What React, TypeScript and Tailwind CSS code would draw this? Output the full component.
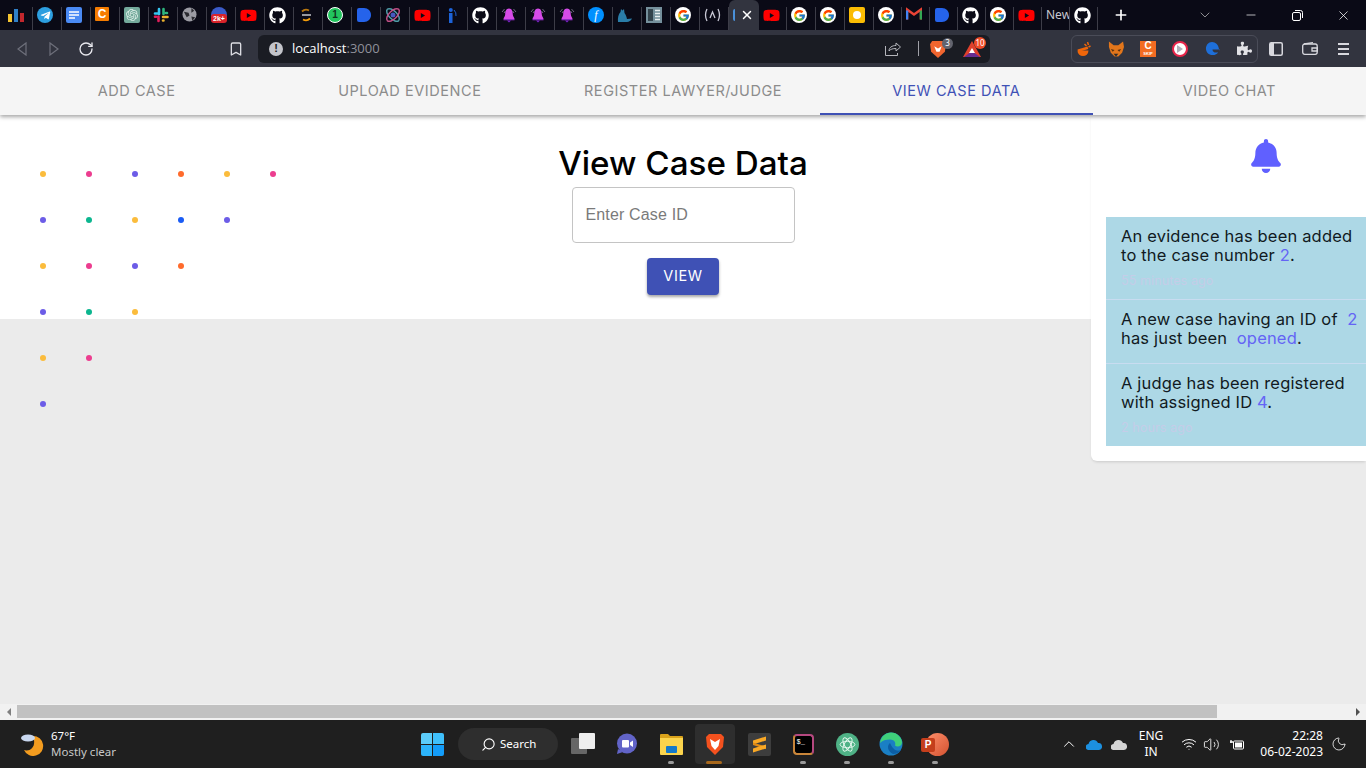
import React from "react";
import { FaGithub, FaYoutube, FaTelegramPlane, FaBell, FaPuzzlePiece } from "react-icons/fa";
import { FcGoogle } from "react-icons/fc";
import { SiOpenai } from "react-icons/si";
import { RotateCw, Bookmark, Minus, X, Plus, ChevronDown, Search, ChevronUp, Wifi, Volume2, Moon } from "lucide-react";

const sans = "font-['Inter','Noto_Sans',sans-serif]";

const Gh = () => <FaGithub className="h-[17px] w-[17px] text-white" />;
const Yt = () => <FaYoutube className="h-[17px] w-[17px] text-[#f00]" />;
const G = () => (
  <span className="flex h-[16px] w-[16px] items-center justify-center rounded-full bg-white">
    <FcGoogle className="h-[13px] w-[13px]" />
  </span>
);
const Alarm = () => (
  <svg width="16" height="16" viewBox="0 0 16 16">
    <path d="M8 1.500c3 0 3.800 3 3.800 6 0 2 1.700 3 1.700 4.500h-11c0-1.500 1.700-2.500 1.700-4.500 0-3 .8-6 3.800-6z" fill="#d64be8" />
    <path d="M2.500 12h11v1.300h-11z" fill="#8e2bc4" />
    <path d="M6 13.500h4l-2 2z" fill="#7e22ce" />
    <path d="M1 5l2.500-3M15 5l-2.500-3M3 6l1.500-2M13 6l-1.500-2" stroke="#6f6a80" strokeWidth="1" />
  </svg>
);
const DBlue = () => (
  <svg width="16" height="16" viewBox="0 0 16 16">
    <path d="M1 3a2 2 0 012-2h5c4 0 7 3 7 7s-3 7-7 7H3a2 2 0 01-2-2z" fill="#2563eb" />
  </svg>
);

const tabs: { n: React.ReactNode }[] = [
  { n: <svg width="16" height="16" viewBox="0 0 16 16"><rect x="0" y="7" width="4" height="8" fill="#f4c430" /><rect x="6" y="2" width="4" height="13" fill="#2f80c8" /><rect x="12" y="6" width="4" height="9" fill="#c2272d" /></svg> },
  { n: <span className="flex h-[16px] w-[16px] items-center justify-center rounded-full bg-[#2d9fe0]"><FaTelegramPlane className="h-[11px] w-[11px] text-white" /></span> },
  { n: <svg width="16" height="16" viewBox="0 0 16 16"><rect width="16" height="16" rx="2" fill="#4a8af4" /><path d="M3 5h10M3 8h10M3 11h6" stroke="#fff" strokeWidth="1.500" /></svg> },
  { n: <span className="flex h-[14px] w-[14px] items-center justify-center rounded-[1px] bg-[#f57c00] font-['Liberation_Sans',sans-serif] text-[12px] font-bold leading-none text-white">C</span> },
  { n: <span className="flex h-[16px] w-[16px] items-center justify-center rounded-[2px] bg-[#74aa9c]"><SiOpenai className="h-[12px] w-[12px] text-[#dff0ea]" /></span> },
  { n: <svg width="16" height="16" viewBox="0 0 16 16" fill="none" strokeWidth="2.600" strokeLinecap="round"><path d="M6 2v5M2 6.500h3" stroke="#36c5f0" /><path d="M10.500 2v5M14 6h-1" stroke="#2eb67d" /><path d="M10 10h4.500M10.500 13.500h-.5" stroke="#ecb22e" /><path d="M5.500 9.500v4.500M2 9.800h1" stroke="#e01e5a" /></svg> },
  { n: <svg width="15" height="15" viewBox="0 0 16 16"><circle cx="8" cy="8" r="7.500" fill="#9b9ba3" /><path d="M2 5l5 1 1 3-3 2zM10 1l3 3-3 2zM10 10l4 1-3 4z" fill="#2a2a30" /></svg> },
  { n: <span className="relative flex h-[16px] w-[16px] justify-center"><span className="h-[16px] w-[16px] rounded-full bg-[#3b5bc8]" /><span className="absolute left-0 top-[7px] w-[16px] rounded-[3px] bg-[#d8232a] text-center font-['Liberation_Sans',sans-serif] text-[7px] font-bold leading-[9px] text-white">2k+</span></span> },
  { n: <Yt /> },
  { n: <Gh /> },
  { n: <svg width="16" height="16" viewBox="0 0 16 16" fill="none"><path d="M11 3.500A6 6 0 004 4.500" stroke="#b9770e" strokeWidth="1.800" /><path d="M5 12.500a6 6 0 007-1" stroke="#f59e0b" strokeWidth="1.800" /><path d="M4 8h9" stroke="#e5e7eb" strokeWidth="1.300" /></svg> },
  { n: <span className="flex h-[16px] w-[16px] items-center justify-center rounded-full border-[1.500px] border-white bg-[#22c55e]"><span className="font-['Liberation_Sans',sans-serif] text-[10px] font-bold leading-none text-[#10321f]">1</span></span> },
  { n: <DBlue /> },
  { n: <svg width="16" height="16" viewBox="0 0 16 16" fill="none"><ellipse cx="8" cy="8" rx="8" ry="4" transform="rotate(45 8 8)" stroke="#4f9ca8" strokeWidth="1.500" /><ellipse cx="8" cy="8" rx="8" ry="4" transform="rotate(-45 8 8)" stroke="#c04f86" strokeWidth="1.500" /><circle cx="8" cy="8" r="2.500" fill="#4858c0" /></svg> },
  { n: <Yt /> },
  { n: <svg width="16" height="16" viewBox="0 0 16 16"><rect x="6" y="6" width="3.500" height="10" fill="#1d63d8" /><circle cx="7.800" cy="3" r="2" fill="#1d63d8" /><path d="M13 9a7 7 0 00-2-6" stroke="#1d63d8" strokeWidth="1" fill="none" /></svg> },
  { n: <Gh /> },
  { n: <Alarm /> },
  { n: <Alarm /> },
  { n: <Alarm /> },
  { n: <span className="flex h-[16px] w-[16px] items-center justify-center rounded-full bg-[#0090ff] font-['Liberation_Serif',serif] text-[12px] italic leading-none text-white">f</span> },
  { n: <svg width="16" height="16" viewBox="0 0 16 16"><path d="M1 15c-.5-4 .5-8 2.500-10l.5-3 1.500 1.500L7 2l.5 4c1.500 2 2 4 2.500 6l5-.5c-1 2-3 3.500-5 3.500z" fill="#2a7da8" /></svg> },
  { n: <svg width="16" height="16" viewBox="0 0 16 16"><rect width="16" height="16" fill="#75909c" /><rect x="2" y="2" width="5" height="12" fill="#33434c" /><path d="M9 3.500h5M9 6.500h5M9 9.500h5M9 12.500h5" stroke="#e8eef0" strokeWidth="1.500" /></svg> },
  { n: <G /> },
  { n: <svg width="17" height="16" viewBox="0 0 17 16" fill="none" stroke="#c9c9d6" strokeWidth="1.300"><path d="M3 2C1 6 1 10 3 14M14 2c2 4 2 8 0 12M6 11l2.500-6L11 11" /></svg> },
];
const tabsRight: { n: React.ReactNode; w: number }[] = [
  { n: <Yt />, w: 28 },
  { n: <G />, w: 29 },
  { n: <G />, w: 29 },
  { n: <span className="flex h-[16px] w-[16px] items-center justify-center rounded-[2px] bg-[#fbbc04]"><span className="h-[8px] w-[8px] rounded-full bg-white" /></span>, w: 29 },
  { n: <G />, w: 28 },
  { n: <svg width="16" height="13" viewBox="0 0 16 12" fill="none"><path d="M1 12V2l7 5 7-5v10" stroke="#ea4335" strokeWidth="2.500" /><path d="M1 12V3" stroke="#4285f4" strokeWidth="2.500" /><path d="M15 12V3" stroke="#34a853" strokeWidth="2.500" /></svg>, w: 28 },
  { n: <DBlue />, w: 28 },
  { n: <Gh />, w: 28 },
  { n: <G />, w: 28 },
  { n: <Yt />, w: 28 },
  { n: <span className="font-['Noto_Sans',sans-serif] text-[12px] leading-[16px] text-[#c8c8d0]">New</span>, w: 28 },
  { n: <Gh />, w: 28 },
];

function Tab({ n, w = 29 }: { n: React.ReactNode; w?: number }) {
  return (
    <div className="mt-[7px] flex h-[23px] shrink-0 items-start overflow-hidden border-r border-[#3d3d48] pl-[4px]" style={{ width: w }}>
      <span className="flex">{n}</span>
    </div>
  );
}

function TabStrip() {
  return (
    <div className="flex h-[30px] shrink-0 items-start bg-[#0a0a16] pl-[4px]">
      {tabs.map((t, i) => (
        <Tab key={i} n={t.n} />
      ))}
      <div className="flex h-[30px] w-[30px] shrink-0 items-center rounded-t-[6px] bg-[#32343f] pl-[4px]">
        <span className="h-[12px] w-[2px] rounded-l-full bg-[#4a90d9]" />
        <X className="ml-[5px] h-[14px] w-[14px] text-white" strokeWidth={2.500} />
      </div>
      {tabsRight.map((t, i) => (
        <Tab key={i} n={t.n} w={t.w} />
      ))}
      <div className="flex h-[30px] w-[46px] items-center justify-center">
        <Plus className="h-[16px] w-[16px] text-white" strokeWidth={2.500} />
      </div>
      <div className="ml-[38px] flex">
        <span className="flex h-[30px] w-[46px] items-center justify-center"><ChevronDown className="h-[16px] w-[16px] text-[#d0d0d0]" strokeWidth={1} /></span>
        <span className="flex h-[30px] w-[46px] items-center justify-center"><Minus className="h-[14px] w-[14px] text-white" strokeWidth={1.200} /></span>
        <span className="flex h-[30px] w-[46px] items-center justify-center">
          <svg width="11" height="11" viewBox="0 0 11 11" fill="none" stroke="#fff"><rect x=".5" y="2.500" width="8" height="8" rx="1.500" /><path d="M3 .5h5.500a2 2 0 012 2V8" /></svg>
        </span>
        <span className="flex h-[30px] w-[46px] items-center justify-center"><X className="h-[15px] w-[15px] text-white" strokeWidth={1.200} /></span>
      </div>
    </div>
  );
}

function ExtSlot({ children }: { children: React.ReactNode }) {
  return <span className="flex h-[16px] w-[16px] items-center justify-center">{children}</span>;
}

function Toolbar() {
  return (
    <div className="flex h-[37px] shrink-0 items-center bg-[#32343f]">
      <div className="flex w-[258px] shrink-0 items-center">
        <svg className="ml-[17px]" width="10" height="14" viewBox="0 0 10 14" fill="none" stroke="#6e707b" strokeWidth="1.200"><path d="M9 1L1 7l8 6z" /></svg>
        <svg className="ml-[22px]" width="10" height="14" viewBox="0 0 10 14" fill="none" stroke="#6e707b" strokeWidth="1.200"><path d="M1 1l8 6-8 6z" /></svg>
        <RotateCw className="ml-[19px] h-[16px] w-[16px] text-[#e8e8ee]" strokeWidth={2} />
        <Bookmark className="ml-[134px] h-[16px] w-[16px] text-[#dcdce2]" strokeWidth={2} />
      </div>
      <div className="flex h-[28px] w-[732px] shrink-0 items-center rounded-[6px] bg-[#1a1c23] pl-[11px] pr-[8px]">
        <span className="flex h-[14px] w-[14px] items-center justify-center rounded-full bg-[#c4c5cb] font-['Liberation_Sans',sans-serif] text-[11px] font-bold leading-none text-[#1a1c23]">!</span>
        <span className="ml-[9px] font-['Open_Sans',sans-serif] text-[13px] leading-none text-white">localhost<span className="text-[#90919a]">:3000</span></span>
        <svg className="ml-auto" width="16" height="15" viewBox="0 0 16 15" fill="none" stroke="#b5b6bc" strokeWidth="1"><path d="M.5 5v9.500h12V12" /><path d="M4 10c0-3.500 3-5.500 7-5.500V2l4.500 4-4.500 4V7.500C8 7.500 5.500 8 4 10z" /></svg>
        <span className="ml-[17px] h-[15px] w-px bg-[#a0a1a8]" />
        <span className="relative ml-[11px] flex h-[18px] w-[16px] items-center justify-center">
          <svg width="16" height="18" viewBox="0 0 15 17"><path d="M2 1h11l2 3-1 7-6.500 6L1 11 0 4z" fill="#f0652f" /><path d="M4 6l3.500 2L11 6l-2 5H6z" fill="#fff" /></svg>
          <span className="absolute -right-[7px] -top-[2px] flex h-[11px] w-[11px] items-center justify-center rounded-full bg-[#62646e] font-['Noto_Sans',sans-serif] text-[8px] leading-none text-white">3</span>
        </span>
        <span className="relative ml-[17px] mr-[1px] flex h-[18px] w-[18px] items-center justify-center">
          <svg width="18" height="16" viewBox="0 0 18 16"><path d="M9 0l9 16H0z" fill="#e0402c" /><path d="M1 16l8-6 8 6z" fill="#662d91" /><path d="M9 7l3 5H6z" fill="#fff" /></svg>
          <span className="absolute -right-[5px] -top-[3px] flex h-[12px] w-[12px] items-center justify-center rounded-full bg-[#ef4b28] font-['Noto_Sans',sans-serif] text-[8px] leading-none text-white">10</span>
        </span>
      </div>
      <div className="ml-[81px] flex h-[28px] w-[187px] shrink-0 items-center gap-[16px] rounded-[6px] border border-[#4a4c58] pl-[4px]">
        <ExtSlot><svg width="16" height="16" viewBox="0 0 15 16"><path d="M1 9.500a5.500 5.500 0 0011 0z" fill="#f0660a" /><path d="M1 8.500l10-3 .8 2.500-10 3z" fill="#f0660a" /><path d="M8 3l2 2M11 1l1 3M14 5l-2 1" stroke="#f0660a" strokeWidth="1.500" /></svg></ExtSlot>
        <ExtSlot><svg width="17" height="16" viewBox="0 0 17 16"><path d="M1 0l5 4h5l5-4 1 6-2 6-4 4H7l-4-4-2-6z" fill="#e2761b" /><path d="M3 8l4 1-2 2zM14 8l-4 1 2 2z" fill="#5a3210" /><path d="M6 13h5l-2.500 3z" fill="#2b2b2b" /></svg></ExtSlot>
        <span className="flex h-[16px] w-[16px] flex-col items-center justify-center bg-[#f26c22] font-['Liberation_Sans',sans-serif] font-bold leading-none text-white"><span className="text-[10px] leading-[10px]">C</span><span className="text-[4px] leading-[5px]">SKIP</span></span>
        <span className="flex h-[16px] w-[16px] items-center justify-center rounded-full border-2 border-[#e8254a] bg-white"><span className="h-0 w-0 border-y-[4px] border-l-[6px] border-y-transparent border-l-[#b0b0b8]" /></span>
        <ExtSlot><svg width="15" height="15" viewBox="0 0 16 16"><path d="M15 10C15 4 11 1 7.500 1 3.500 1 1 4.500 1 8c0 4 3 7 7 7 3 0 5-1 6-3-3 1-6 0-6-3h8z" fill="#1e6fd9" /></svg></ExtSlot>
        <ExtSlot><FaPuzzlePiece className="h-[15px] w-[15px] text-[#e2e2e6]" /></ExtSlot>
      </div>
      <svg className="ml-[11px]" width="14" height="14" viewBox="0 0 14 14"><rect x=".75" y=".75" width="12.500" height="12.500" rx="1.500" fill="none" stroke="#d8d8de" strokeWidth="1.500" /><rect x="1" y="1" width="4" height="12" fill="#d8d8de" /></svg>
      <svg className="ml-[19px]" width="16" height="13" viewBox="0 0 16 13" fill="none" stroke="#d8d8de" strokeWidth="1.300"><rect x=".7" y="2" width="14.500" height="10.300" rx="2" /><path d="M2 2l9-1.300M10 6h5.300v3H10z" /></svg>
      <span className="ml-[20px] flex w-[11px] flex-col gap-[3px]">
        <span className="h-[2px] bg-[#d8d8de]" />
        <span className="h-[2px] bg-[#d8d8de]" />
        <span className="h-[2px] bg-[#d8d8de]" />
      </span>
    </div>
  );
}

const navItems = ["ADD CASE", "UPLOAD EVIDENCE", "REGISTER LAWYER/JUDGE", "VIEW CASE DATA", "VIDEO CHAT"];

function Nav() {
  return (
    <div className="relative z-30 flex h-[48px] shrink-0 bg-[#f5f5f5] shadow-[0_2px_4px_rgba(0,0,0,0.35)]">
      {navItems.map((t, i) => (
        <div
          key={t}
          className={`flex flex-1 items-center justify-center border-b-2 pt-[2px] text-[14.500px] tracking-[0.55px] ${sans} ${
            i === 3 ? "border-[#3f51b5] text-[#3f51b5]" : "border-transparent text-[#8c8c8c]"
          }`}
        >
          {t}
        </div>
      ))}
    </div>
  );
}

const dotRows = [
  ["#fbbc3c", "#ec3d8f", "#6c5ce7", "#ff6b2c", "#fbbc3c", "#ec3d8f"],
  ["#6c5ce7", "#0cb68f", "#fbbc3c", "#1a5cf5", "#6c5ce7"],
  ["#fbbc3c", "#ec3d8f", "#6c5ce7", "#ff6b2c"],
  ["#6c5ce7", "#0cb68f", "#fbbc3c"],
  ["#fbbc3c", "#ec3d8f"],
  ["#6c5ce7"],
];

function Dots() {
  return (
    <div className="absolute left-[40px] top-[104px] flex flex-col gap-[40px]">
      {dotRows.map((r, i) => (
        <div key={i} className="flex gap-[40px]">
          {r.map((c, j) => (
            <span key={j} className="h-[6px] w-[6px] rounded-full" style={{ backgroundColor: c }} />
          ))}
        </div>
      ))}
    </div>
  );
}

function Notifications() {
  const time = `mt-[7px] text-[12.500px] leading-[18px] tracking-[0.1px] text-[#c4cde8]`;
  const line = `text-[16.500px] leading-[19px] tracking-[0.17px] text-[#111a22]`;
  const hl = "text-[#6464f5]";
  return (
    <div className="absolute right-0 top-[48px] z-20 flex h-[346px] w-[275px] flex-col rounded-bl-[6px] bg-white pl-[15px] shadow-[0_2px_3px_-1px_rgba(0,0,0,0.14)]">
      <div className="flex h-[102px] shrink-0 justify-center pl-[60px] pt-[24px]">
        <FaBell className="h-[34px] w-[30px] text-[#6060ff]" />
      </div>
      <div className={`bg-[#add8e6] ${sans}`}>
        <div className="h-[83px] border-b border-[#c8dcf0] pl-[15px] pt-[10px]">
          <p className={line}>An evidence has been added to the case number <span className={hl}>2</span>.</p>
          <p className={time}>55 minutes ago</p>
        </div>
        <div className="h-[64px] border-b border-[#c8dcf0] pl-[15px] pt-[10px]">
          <p className={line}>A new case having an ID of&nbsp; <span className={hl}>2</span> has just been&nbsp; <span className={hl}>opened</span>.</p>
        </div>
        <div className="h-[82px] pl-[15px] pt-[10px]">
          <p className={line}>A judge has been registered with assigned ID <span className={hl}>4</span>.</p>
          <p className={time}>2 hours ago</p>
        </div>
      </div>
    </div>
  );
}

function Page() {
  return (
    <div className="relative flex flex-1 flex-col overflow-hidden bg-[#ebebeb]">
      <Nav />
      <div className="flex h-[204px] shrink-0 flex-col items-center bg-white">
        <h1 className={`mt-[24px] text-[33.200px] font-medium leading-[48px] text-black ${sans}`}>View Case Data</h1>
        <input
          placeholder="Enter Case ID"
          className="h-[56px] w-[223px] rounded-[4px] border border-[#c4c4c4] px-[13px] font-['Liberation_Sans',sans-serif] text-[16px] tracking-[0.15px] text-black outline-none placeholder:text-[#7a7a7a]"
        />
        <button className={`mt-[15px] h-[37px] w-[72px] rounded-[4px] bg-[#3f51b5] pb-[1px] text-[14.500px] tracking-[0.6px] text-white shadow-[0_2px_3px_rgba(0,0,0,0.35)] ${sans}`}>VIEW</button>
      </div>
      <Dots />
      <Notifications />
    </div>
  );
}

function Scrollbar() {
  return (
    <div className="flex h-[16px] shrink-0 items-start bg-[#f1f1f1] pt-[1px]">
      <span className="flex h-[13px] w-[17px] items-center justify-center">
        <span className="h-0 w-0 border-y-[4px] border-r-[4px] border-y-transparent border-r-[#7f7f7f]" />
      </span>
      <span className="h-[13px] w-[1200px] bg-[#c1c1c1]" />
      <span className="ml-auto flex h-[13px] w-[17px] items-center justify-center">
        <span className="h-0 w-0 border-y-[4px] border-l-[4px] border-y-transparent border-l-[#505050]" />
      </span>
    </div>
  );
}

function TaskIcon({ children, dot, active }: { children: React.ReactNode; dot?: boolean; active?: boolean }) {
  return (
    <div className={`relative flex h-[40px] w-[40px] items-center justify-center rounded-[4px] ${active ? "bg-[#2e2e2e]" : ""}`}>
      {children}
      {dot && <span className="absolute bottom-0 left-[17px] h-[3px] w-[6px] rounded-full bg-[#9a9a9a]" />}
      {active && <span className="absolute bottom-0 left-[11px] h-[3px] w-[16px] rounded-full bg-[#a8681c]" />}
    </div>
  );
}

function Taskbar() {
  const f = "font-['Noto_Sans','Open_Sans',sans-serif]";
  return (
    <div className={`flex h-[48px] shrink-0 items-center bg-[#1f1f1f] ${f}`}>
      <div className="flex w-[421px] shrink-0 items-center pl-[20px]">
        <svg width="24" height="24" viewBox="0 0 24 24">
          <path d="M10 3a10 10 0 11-9 14c6 2 13-3 9-14z" fill="#f39c1f" transform="translate(3 1)" />
          <ellipse cx="8" cy="6" rx="7" ry="3.500" fill="#c9d8f0" />
        </svg>
        <div className="ml-[7px] flex flex-col">
          <span className="text-[11.500px] leading-[16px] text-white">67°F</span>
          <span className="text-[11.500px] leading-[16px] text-[#c8c8c8]">Mostly clear</span>
        </div>
      </div>
      <div className="grid h-[23px] w-[23px] shrink-0 grid-cols-2 gap-[1px]">
        <span className="rounded-tl-[2px] bg-[#5ccdfa]" />
        <span className="rounded-tr-[2px] bg-[#3fc0fb]" />
        <span className="rounded-bl-[2px] bg-[#2cb4fb]" />
        <span className="rounded-br-[2px] bg-[#139dfa]" />
      </div>
      <div className="ml-[14px] flex h-[32px] w-[100px] shrink-0 items-center rounded-full bg-[#2e2e2e] pl-[23px]">
        <Search className="h-[15px] w-[15px] -scale-x-100 text-white" strokeWidth={1.800} />
        <span className="ml-[4px] text-[11.500px] text-white">Search</span>
      </div>
      <div className="ml-[5px] flex shrink-0 gap-[4px]">
        <TaskIcon>
          <span className="relative h-[24px] w-[24px]">
            <span className="absolute bottom-[2px] left-0 h-[16px] w-[16px] rounded-[1px] bg-[#666]" />
            <span className="absolute right-0 top-[1px] h-[16px] w-[16px] rounded-[1px] bg-[#eee]" />
          </span>
        </TaskIcon>
        <TaskIcon>
          <svg width="22" height="22" viewBox="0 0 22 22"><circle cx="11" cy="10.500" r="10" fill="#6264c8" /><path d="M2 16l-1 5 6-2z" fill="#6264c8" /><rect x="6" y="7" width="7" height="7.500" rx="1" fill="#fff" /><path d="M14 9.500l3-2v6.500l-3-2z" fill="#fff" /></svg>
        </TaskIcon>
        <TaskIcon dot>
          <svg width="23" height="22" viewBox="0 0 23 22"><path d="M0 2a1 1 0 011-1h7l2 2h12a1 1 0 011 1v3H0z" fill="#d9a21b" /><path d="M0 5h23v16a1 1 0 01-1 1H1a1 1 0 01-1-1z" fill="#fbd44d" /><rect x="6" y="13" width="11" height="7" rx="1" fill="#1479c9" /></svg>
        </TaskIcon>
        <TaskIcon active>
          <svg width="20" height="23" viewBox="0 0 20 23"><path d="M4 1h12l3 3-1 10-8 8-8-8L1 4z" fill="#f4511e" /><path d="M5 6l5 3 5-3-1.500 7L10 17l-3.500-4z" fill="#fff" /></svg>
        </TaskIcon>
        <TaskIcon>
          <span className="flex h-[23px] w-[23px] items-center justify-center rounded-[2px] bg-[#3d3d3d]">
            <svg width="13" height="17" viewBox="0 0 13 17"><path d="M0 4.500L13 .5v4L0 8.500z" fill="#f9a825" /><path d="M0 6.500l13 4v2.500L0 9z" fill="#e08a14" /><path d="M0 12.500L13 8.500v4L0 16.500z" fill="#f9a825" /></svg>
          </span>
        </TaskIcon>
        <TaskIcon dot>
          <span className="flex h-[21px] w-[21px] items-start rounded-[4px] border-2 border-t-[#b5487f] border-r-[#b5487f] border-b-[#c9863a] border-l-[#c9863a] bg-black pl-[2px] pt-[2px] font-['Liberation_Mono',monospace] text-[7px] leading-[8px] text-white">$_</span>
        </TaskIcon>
        <TaskIcon dot>
          <span className="flex h-[23px] w-[23px] items-center justify-center rounded-full bg-[#4fb286]">
            <svg width="17" height="17" viewBox="0 0 16 16" fill="none" stroke="#e5f7ee" strokeWidth=".9"><ellipse cx="8" cy="8" rx="7" ry="3" /><ellipse cx="8" cy="8" rx="7" ry="3" transform="rotate(60 8 8)" /><ellipse cx="8" cy="8" rx="7" ry="3" transform="rotate(-60 8 8)" /></svg>
          </span>
        </TaskIcon>
        <TaskIcon dot>
          <svg width="24" height="24" viewBox="0 0 24 24"><circle cx="12" cy="12" r="11.500" fill="#1a7fc4" /><path d="M1 11C2 4 7 .5 12 .5c6 0 11 5 11 10 0 4-5 5-7 3 1-2 0-6-5-6-4 0-8 1-10 3.500z" fill="#3fd07a" /><path d="M11 11c-3 2-3 8 3 11 3 0 6-1 8-4-4 2-8 0-11-7z" fill="#0c5ea5" /></svg>
        </TaskIcon>
        <TaskIcon dot>
          <span className="relative flex h-[23px] w-[28px] items-center">
            <span className="absolute right-0 h-[23px] w-[23px] rounded-full bg-gradient-to-br from-[#ff8f6b] to-[#d35230]" />
            <span className="absolute left-0 top-[5px] flex h-[14px] w-[14px] items-center justify-center rounded-[2px] bg-[#c43e1c] font-['Liberation_Sans',sans-serif] text-[10px] font-bold leading-none text-white">P</span>
          </span>
        </TaskIcon>
      </div>
      <div className="ml-auto flex shrink-0 items-center pr-[19px]">
        <ChevronUp className="h-[18px] w-[18px] text-white" strokeWidth={1.300} />
        <svg className="ml-[8px]" width="16" height="11" viewBox="0 0 16 11"><path d="M3 11a3 3 0 01-.5-6 5 5 0 019.500-1 3.500 3.500 0 011 7z" fill="#1c90e0" /></svg>
        <svg className="ml-[9px]" width="16" height="11" viewBox="0 0 16 11"><path d="M3 11a3 3 0 01-.5-6 5 5 0 019.500-1 3.500 3.500 0 011 7z" fill="#d4d4d4" /></svg>
        <div className="ml-[3px] flex w-[42px] flex-col items-center text-[12px] leading-[16px] text-white">
          <span>ENG</span>
          <span>IN</span>
        </div>
        <Wifi className="ml-[9px] h-[16px] w-[16px] text-white" strokeWidth={1.500} />
        <Volume2 className="ml-[6px] h-[17px] w-[17px] text-white" strokeWidth={1.200} />
        <svg className="ml-[9px]" width="16" height="13" viewBox="0 0 16 13" fill="none" stroke="#fff"><rect x="4.500" y="3" width="10" height="8" rx="1" /><path d="M1 4h3M2 2v3" strokeWidth="1.300" /><rect x="6" y="4.500" width="7" height="5" fill="#fff" stroke="none" /></svg>
        <div className="ml-[16px] flex w-[62px] flex-col items-end text-[12px] leading-[16px] text-white">
          <span>22:28</span>
          <span className="whitespace-nowrap">06-02-2023</span>
        </div>
        <Moon className="ml-[8px] h-[16px] w-[16px] text-white" strokeWidth={1.200} />
      </div>
    </div>
  );
}

export default function App() {
  return (
    <div className="flex h-[768px] w-[1366px] flex-col overflow-hidden">
      <TabStrip />
      <Toolbar />
      <Page />
      <Scrollbar />
      <Taskbar />
    </div>
  );
}
